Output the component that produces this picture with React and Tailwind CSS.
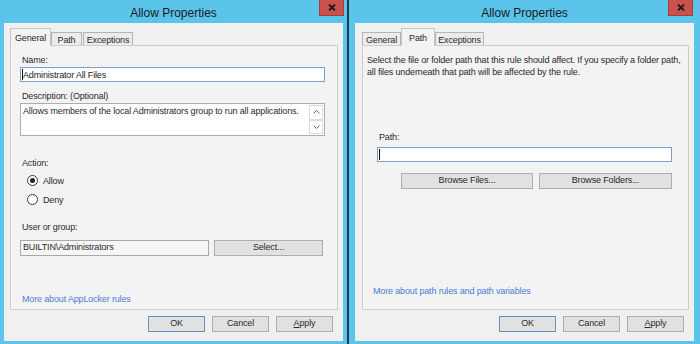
import React from 'react';

// Windows 8 style dialog pair: "Allow Properties" (General tab, Path tab)

function CloseButton({ className }) {
  return (
    <div className={`absolute top-0 ${className} w-[25px] h-[16px] bg-[#c9524f] border border-t-0 border-[#a33f3c] flex items-center justify-center`}>
      <svg width="8" height="7" viewBox="0 0 8 7">
        <path d="M1 0.5 L7 6.5 M7 0.5 L1 6.5" stroke="#1a1a1a" strokeWidth="1.8" />
      </svg>
    </div>
  );
}

function Window({ className, closeClass, clientClass, children }) {
  return (
    <div className={`flex flex-col bg-[#5ac4ea] ${className}`}>
      <div className="relative h-[23px] flex items-center justify-center pt-[2px] text-[12px] tracking-normal text-[#1b1b1b]">
        Allow Properties
        <CloseButton className={closeClass} />
      </div>
      <div className={`flex flex-col bg-[#f0f0f0] h-[318px] ${clientClass}`}>{children}</div>
    </div>
  );
}

function Tab({ label, selected, className }) {
  if (selected) {
    return (
      <div className={`relative z-10 -mb-px h-[18px] bg-[#f3f3f3] border border-b-0 border-[#c6c6c6] flex justify-center pt-[3px] leading-[12px] ${className}`}>
        {label}
      </div>
    );
  }
  return (
    <div className={`h-[14px] -mb-px bg-[#ececec] border border-b-0 border-[#b4b4b4] flex justify-center pt-[1px] leading-[12px] ${className}`}>
      {label}
    </div>
  );
}

function Button({ children, className = '', primary }) {
  return (
    <div className={`h-[16px] flex items-center justify-center bg-[#e1e1e1] border ${primary ? 'border-[#5d93c8]' : 'border-[#adadad]'} ${className}`}>
      {children}
    </div>
  );
}

function Footer() {
  return (
    <div className="flex justify-end gap-[7px] pr-[5px] mt-[6px]">
      <Button className="w-[57px]" primary>OK</Button>
      <Button className="w-[57px]">Cancel</Button>
      <Button className="w-[57px]"><span className="underline">A</span>pply</Button>
    </div>
  );
}

function Radio({ checked, label }) {
  return (
    <div className="flex items-center h-[13px] ml-[7px]">
      <div className="w-[11px] h-[11px] rounded-full border border-[#3a3a3a] bg-white flex items-center justify-center">
        {checked && <div className="w-[5px] h-[5px] rounded-full bg-[#222]" />}
      </div>
      <span className="ml-[5px] leading-[12px]">{label}</span>
    </div>
  );
}

function Chevron({ up }) {
  return (
    <svg width="7" height="4" viewBox="0 0 7 4">
      <path d={up ? 'M0.5 3.5 L3.5 0.5 L6.5 3.5' : 'M0.5 0.5 L3.5 3.5 L6.5 0.5'} fill="none" stroke="#6a6a6a" strokeWidth="1" />
    </svg>
  );
}

function GeneralPanel() {
  return (
    <div className="h-[265px] border border-[#cdcdcd] bg-[#f3f3f3] flex flex-col pl-[9px] pt-[8px]">
      <div className="ml-[2px] leading-[12px]">Name:</div>
      <div className="mt-[1px] h-[15px] w-[305px] bg-white border border-[#7f9fc6] flex items-center pl-[1px]">
        <span className="w-px h-[11px] bg-[#111]" />
        <span className="leading-[12px] text-[#222]">Administrator All Files</span>
      </div>
      <div className="mt-[8px] ml-[2px] leading-[12px]">Description: (Optional)</div>
      <div className="mt-[1px] h-[33px] w-[305px] bg-white border border-[#abadb3] flex">
        <div className="flex-1 pl-[2px] pt-[1px] leading-[12px] whitespace-nowrap">Allows members of the local Administrators group to run all applications.</div>
        <div className="w-[15px] flex flex-col py-[1px] pr-[1px]">
          <div className="h-[15px] border border-[#dcdcdc] flex items-center justify-center"><Chevron up /></div>
          <div className="h-[15px] border border-[#dcdcdc] flex items-center justify-center"><Chevron /></div>
        </div>
      </div>
      <div className="mt-[21px] ml-[2px] leading-[12px]">Action:</div>
      <div className="mt-[5px]"><Radio checked label="Allow" /></div>
      <div className="mt-[6px]"><Radio label="Deny" /></div>
      <div className="mt-[15px] ml-[2px] leading-[12px]">User or group:</div>
      <div className="mt-[7px] flex gap-[5px]">
        <div className="h-[16px] w-[189px] bg-[#f6f6f6] border border-[#a9a9a9] flex items-center pl-[2px]">BUILTIN\Administrators</div>
        <Button className="w-[109px]">Select...</Button>
      </div>
      <div className="mt-auto mb-[4px] ml-[2px] leading-[12px] text-[#4a7dd2]">More about AppLocker rules</div>
    </div>
  );
}

function PathPanel() {
  return (
    <div className="h-[265px] border border-[#cdcdcd] bg-[#f3f3f3] flex flex-col pl-[4px] pt-[8px]">
      <div className="leading-[12px] whitespace-nowrap">
        Select the file or folder path that this rule should affect. If you specify a folder path,
        <br />
        all files underneath that path will be affected by the rule.
      </div>
      <div className="mt-[53px] ml-[12px] leading-[12px]">Path:</div>
      <div className="mt-[4px] ml-[10px] h-[15px] w-[295px] bg-white border border-[#7f9fc6] flex items-center pl-[1px]">
        <span className="w-px h-[11px] bg-[#111]" />
      </div>
      <div className="mt-[11px] ml-[34px] flex gap-[6px]">
        <Button className="w-[132px]">Browse Files...</Button>
        <Button className="w-[133px]">Browse Folders...</Button>
      </div>
      <div className="mt-auto mb-[12px] ml-[6px] leading-[12px] text-[#4a7dd2]">More about path rules and path variables</div>
    </div>
  );
}

export default function App() {
  return (
    <div className="flex w-[700px] h-[344px] overflow-hidden bg-[#1d3b52] font-['Liberation_Sans',Arial,sans-serif] text-[9px] tracking-[-0.15px] text-[#2a2a2a]">
      <Window className="w-[347px]" closeClass="right-[3px]" clientClass="mx-[4px] pl-[6px] pr-[5px] pt-[5px]">
        <div className="flex items-end h-[17px]">
          <Tab label="General" selected className="w-[41px]" />
          <Tab label="Path" className="w-[31px]" />
          <Tab label="Exceptions" className="w-[50px] ml-px" />
        </div>
        <GeneralPanel />
        <Footer />
      </Window>
      <div className="w-[2px] bg-[#1d3b52]" />
      <Window className="w-[351px]" closeClass="right-[7px]" clientClass="mx-[6px] pl-[7px] pr-[5px] pt-[5px]">
        <div className="flex items-end h-[17px]">
          <Tab label="General" className="w-[39px]" />
          <Tab label="Path" selected className="w-[34px]" />
          <Tab label="Exceptions" className="w-[49px]" />
        </div>
        <PathPanel />
        <Footer />
      </Window>
    </div>
  );
}
